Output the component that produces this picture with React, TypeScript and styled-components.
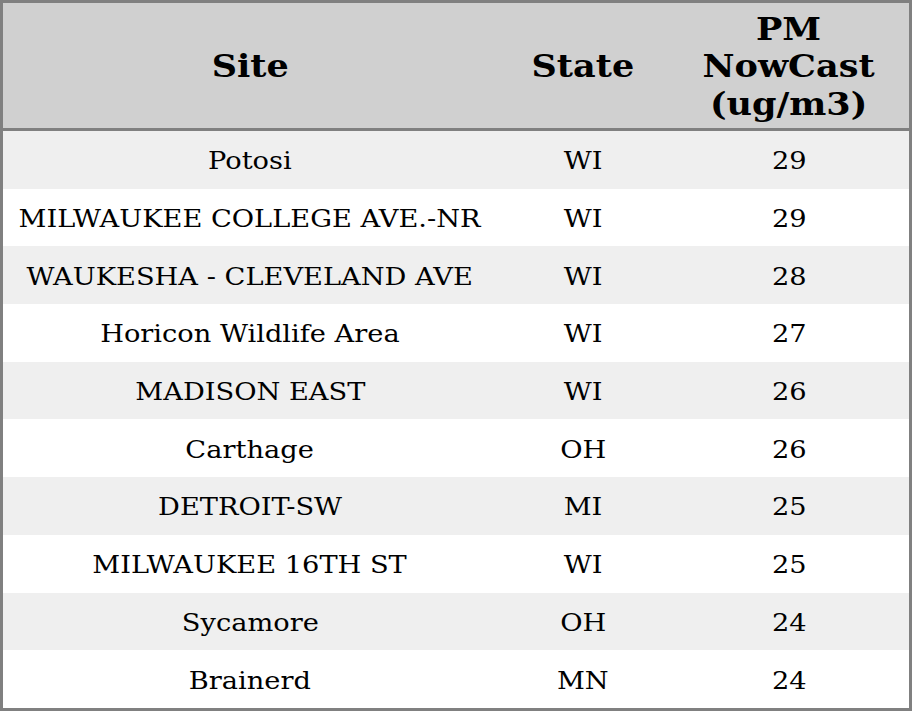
import React from "react";
import styled, { createGlobalStyle } from "styled-components";

const Global = createGlobalStyle`
  html, body { margin: 0; padding: 0; background: #ffffff; }
  #root { width: 912px; height: 711px; }
`;

const Table = styled.table`
  width: 912px;
  border-collapse: collapse;
  border: 3px solid #808080;
  font-family: "DejaVu Serif", serif;
  color: #000;
  box-sizing: border-box;
`;

const HeadCell = styled.th<{ $w: number }>`
  width: ${(p) => p.$w}px;
  background: #d0d0d0;
  font-size: 32px;
  font-weight: bold;
  line-height: 37.5px;
  padding: 7.5px 0 5px;
  text-align: center;
  border-bottom: 3px solid #808080;
`;

const HeadText = styled.span`
  display: inline-block;
  transform: scaleX(1.095);
`;

const Row = styled.tr<{ $alt: boolean }>`
  background: ${(p) => (p.$alt ? "#efefef" : "#ffffff")};
`;

const Cell = styled.td`
  height: 57.7px;
  padding: 0;
  font-size: 24px;
  line-height: 30px;
  text-align: center;
  vertical-align: middle;
`;

const CellText = styled.span`
  display: inline-block;
  white-space: nowrap;
  padding-top: 3px;
  transform: scaleX(1.135);
`;

const rows: [string, string, number][] = [
  ["Potosi", "WI", 29],
  ["MILWAUKEE COLLEGE AVE.-NR", "WI", 29],
  ["WAUKESHA - CLEVELAND AVE", "WI", 28],
  ["Horicon Wildlife Area", "WI", 27],
  ["MADISON EAST", "WI", 26],
  ["Carthage", "OH", 26],
  ["DETROIT-SW", "MI", 25],
  ["MILWAUKEE 16TH ST", "WI", 25],
  ["Sycamore", "OH", 24],
  ["Brainerd", "MN", 24],
];

export default function App() {
  return (
    <>
      <Global />
      <Table>
        <thead>
          <tr>
            <HeadCell $w={494}>
              <HeadText>Site</HeadText>
            </HeadCell>
            <HeadCell $w={172}>
              <HeadText>State</HeadText>
            </HeadCell>
            <HeadCell $w={240}>
              <HeadText>
                PM
                <br />
                NowCast
                <br />
                (ug/m3)
              </HeadText>
            </HeadCell>
          </tr>
        </thead>
        <tbody>
          {rows.map(([site, st, v], i) => (
            <Row key={i} $alt={i % 2 === 0}>
              <Cell>
                <CellText>{site}</CellText>
              </Cell>
              <Cell>
                <CellText>{st}</CellText>
              </Cell>
              <Cell>
                <CellText>{v}</CellText>
              </Cell>
            </Row>
          ))}
        </tbody>
      </Table>
    </>
  );
}
